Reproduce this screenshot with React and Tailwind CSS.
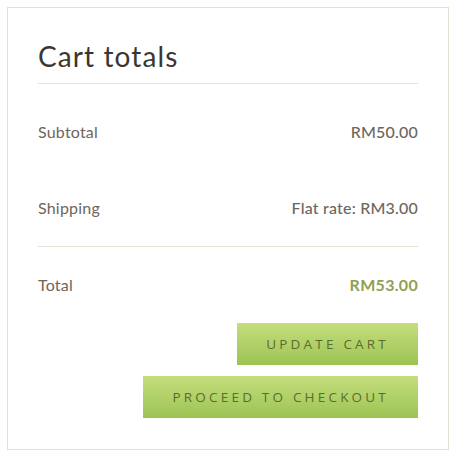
import React from 'react';

const rows = [
  { label: 'Subtotal', value: 'RM50.00' },
  { label: 'Shipping', value: 'Flat rate: RM3.00', border: true },
];

function Row({ label, value, border, strong, tall = 'h-[77px]' }) {
  return (
    <div
      className={
        'flex items-center justify-between ' + tall + ' ' +
        (border ? 'border-b border-[#e6e4d6]' : '')
      }
    >
      <span className="text-[16px] text-[#6e665c] tracking-[0.2px]">{label}</span>
      <span
        className={
          strong
            ? 'text-[16px] font-bold text-[#8fa052] tracking-[0.3px]'
            : 'text-[16px] font-medium text-[#6e665c] tracking-[0.2px]'
        }
      >
        {value}
      </span>
    </div>
  );
}

export default function App() {
  return (
    <div className="bg-white min-h-screen p-[7px] font-['Lato',sans-serif]">
      <div className="border border-[#e3e1d0] px-[30px] pt-[31px] pb-[31px]">
        {/* Heading */}
        <h2 className="text-[28px] leading-[34px] text-[#3a3633] pb-[10px] border-b border-[#e6e4d6] tracking-[1.1px]">
          Cart totals
        </h2>

        <div className="mt-[9px]">
          {rows.map((r) => (
            <Row key={r.label} {...r} />
          ))}
          <Row label="Total" value="RM53.00" strong tall="h-[76px]" />
        </div>

        {/* Actions */}
        <div className="flex flex-col items-end gap-[11px]">
          <button className="h-[42px] px-[29px] bg-gradient-to-b from-[#c4de7c] to-[#9dc354] text-[#5b6d2c] text-[13.5px] tracking-[3.2px] font-['Open_Sans',sans-serif]">
            UPDATE CART
          </button>
          <button className="h-[42px] px-[29px] bg-gradient-to-b from-[#c4de7c] to-[#9dc354] text-[#5b6d2c] text-[13.5px] tracking-[3.2px] font-['Open_Sans',sans-serif]">
            PROCEED TO CHECKOUT
          </button>
        </div>
      </div>
    </div>
  );
}
